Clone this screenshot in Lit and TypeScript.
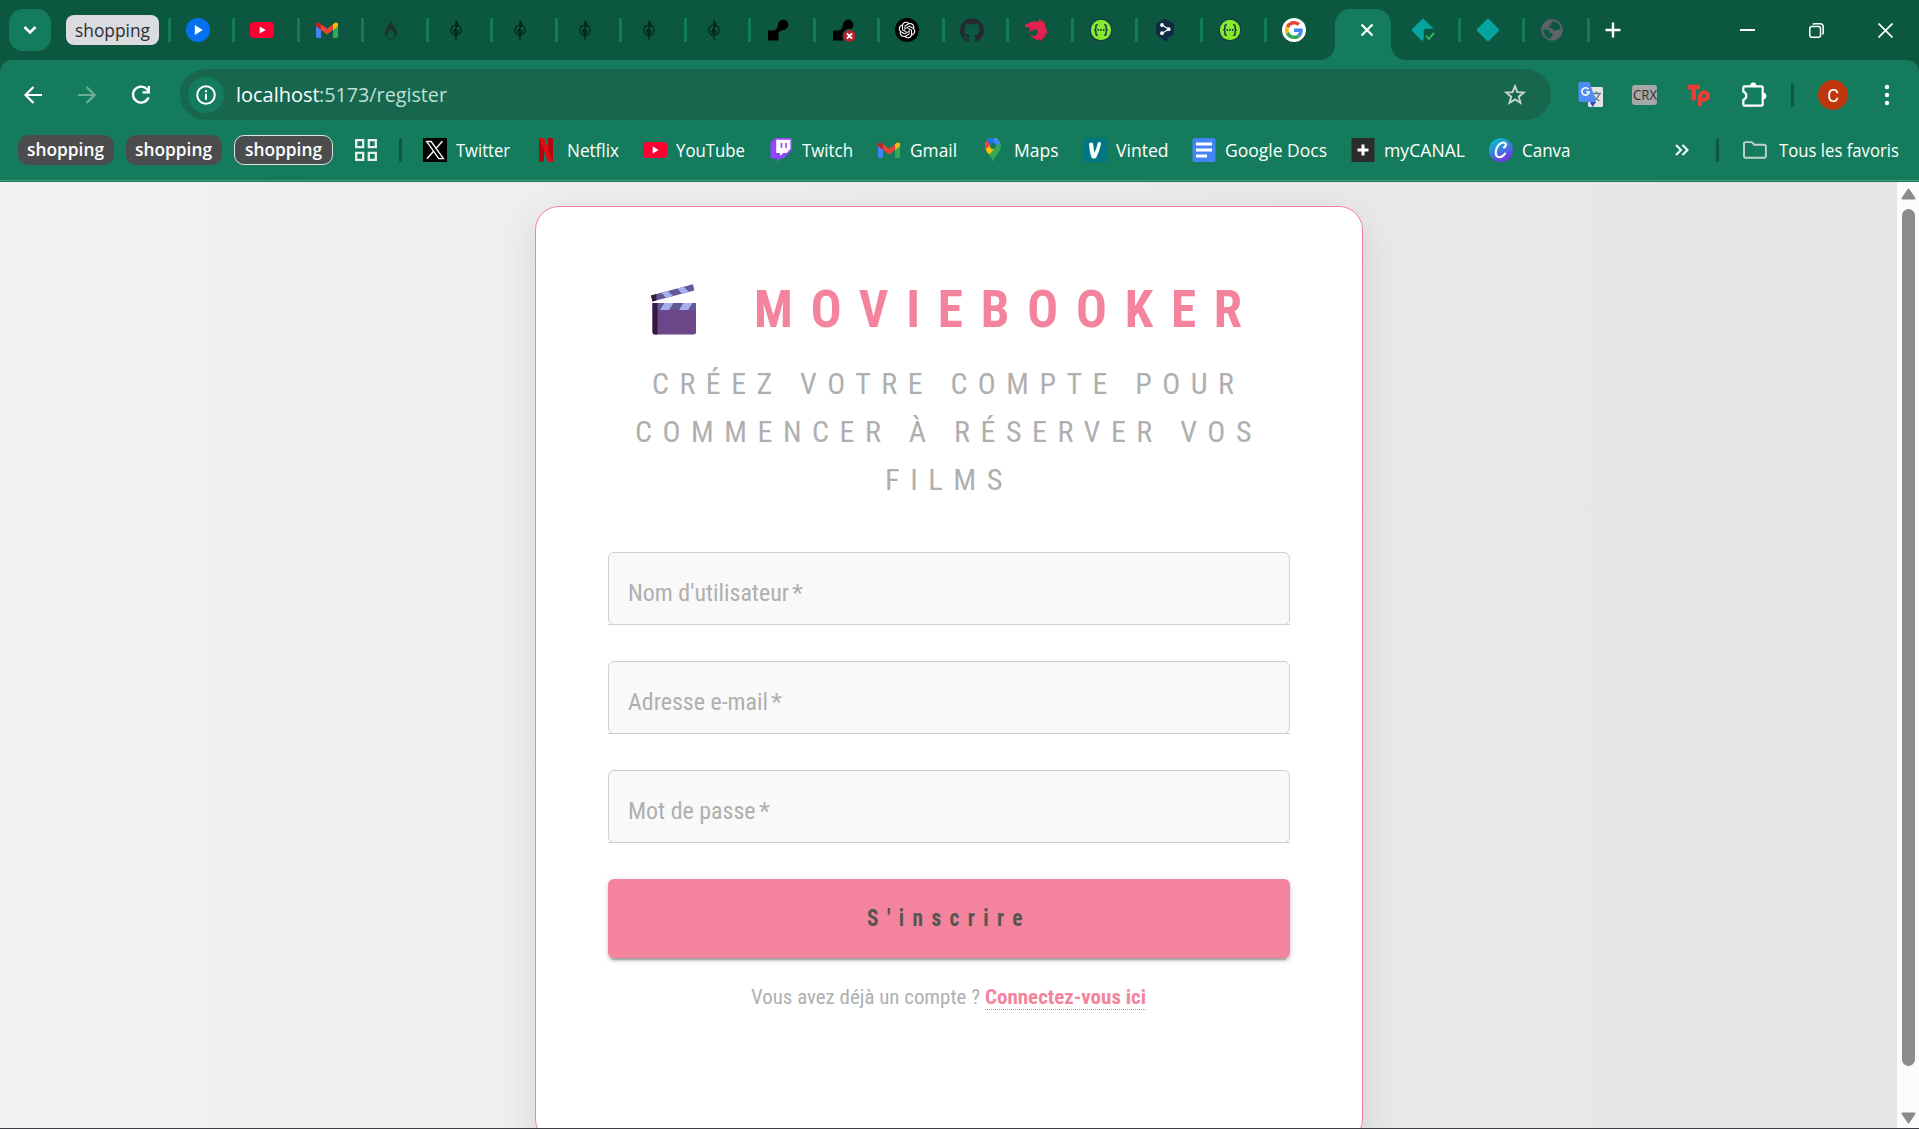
import { LitElement, html, css, svg } from "lit";
import type { TemplateResult } from "lit";
import { customElement, property } from "lit/decorators.js";

/** A single line of text condensed or widened to an exact width. */
@customElement("fit-text")
class FitText extends LitElement {
  @property() text = "";
  @property({ type: Number }) w = 0;
  @property({ type: Number }) ls = 0;
  static styles = css`
    :host { display: inline-block; white-space: pre; flex: none; }
    .t { display: inline-block; transform-origin: 0 50%; }
  `;
  render() {
    return html`<span class="t">${this.text}</span>`;
  }
  updated() {
    this.style.width = `${this.w}px`;
    const t = this.renderRoot.querySelector<HTMLElement>(".t")!;
    t.style.transform = "none";
    t.style.letterSpacing = "0px";
    const natural = t.getBoundingClientRect().width;
    const k = (this.w - this.text.length * this.ls) / natural;
    t.style.letterSpacing = `${this.ls / k}px`;
    t.style.transform = `scaleX(${k})`;
  }
}

const fit = (text: string, w: number, ls = 0) =>
  html`<fit-text .text=${text} .w=${w} .ls=${ls}></fit-text>`;

const gmail = html`<svg width="24" height="24" viewBox="0 0 24 24">
  <path d="M1 6.5V18.6q0 1.4 1.4 1.4H6V10.5z" fill="#4285f4"/>
  <path d="M18 10.5V20h3.6q1.4 0 1.4-1.4V6.5z" fill="#34a853"/>
  <path d="M6 6.2V12l6 4.6 6-4.6V6.2l-6 4.6z" fill="#ea4335"/>
  <path d="M1 6.4V8.2L6 12V6.2L4.8 5.2C3.2 4 1 4.8 1 6.4z" fill="#c5221f"/>
  <path d="M23 6.4V8.2L18 12V6.2l1.2-1C20.800 4 23 4.800 23 6.400z" fill="#fbbc04"/>
</svg>`;
const youtube = html`<svg width="24" height="24" viewBox="0 0 24 24">
  <rect x="0" y="4" width="24" height="16" rx="3.5" fill="#ff0033"/><path d="M9.700 8.500v7l6-3.500z" fill="#fff"/>
</svg>`;
const clef = html`<svg width="24" height="24" viewBox="0 0 24 24" fill="none" stroke="#06211a" stroke-width="1.200">
  <circle cx="12" cy="12.200" r="5.200"/>
  <path d="M12 22V3.200q2.600 2.400 1.400 4.600L11 11q-2 2.600 0 4 2.400.8 3-1.200 0-2-1.800-1.800-1.600.4-1 1.600"/>
  <path d="M12.400 2.600l1.600 3.600-1.600 1.400z" fill="#06211a" stroke="none"/>
</svg>`;
const blob = html`<svg width="24" height="24" viewBox="0 0 24 24">
  <path d="M2 12.500h4.500q4.500.2 5.500-5.500a5.200 5.200 0 1 1 5 5q-4.500.600-4.500 4.500V22.500H2z" fill="#000"/>
</svg>`;
const blobError = html`<svg width="24" height="24" viewBox="0 0 24 24">
  <path d="M2 12.500h4.500q4.500.2 5.500-5.500a5.200 5.200 0 1 1 5 5q-4.500.600-4.500 4.500V22.500H2z" fill="#000"/>
  <circle cx="18.500" cy="18" r="7.200" fill="#0b573f"/><circle cx="18.500" cy="18" r="6" fill="#b5202c"/>
  <path d="M15.900 15.400l5.200 5.200m0-5.200l-5.200 5.200" stroke="#fff" stroke-width="1.900"/>
</svg>`;
const swagger = html`<svg width="24" height="24" viewBox="0 0 24 24">
  <circle cx="12" cy="12" r="11.300" fill="#173647"/><circle cx="12" cy="12" r="10.200" fill="#85ea2d"/>
  <path d="M8.800 6.700Q6.900 6.600 6.900 8.500V10q0 2-1.600 2 1.600 0 1.600 2v1.500q0 1.900 1.900 1.800M15.200 6.700q1.900-.1 1.900 1.800V10q0 2 1.600 2-1.600 0-1.600 2v1.500q0 1.900-1.900 1.800" fill="none" stroke="#173647" stroke-width="1.500"/>
  <circle cx="9.300" cy="12" r=".95" fill="#173647"/><circle cx="12" cy="12" r=".95" fill="#173647"/><circle cx="14.700" cy="12" r=".95" fill="#173647"/>
</svg>`;

const icons: Record<string, TemplateResult> = {
  gmail, youtube, clef, blob, blobError, swagger,
  play: html`<svg width="24" height="24" viewBox="0 0 24 24"><circle cx="12" cy="12" r="12" fill="#0571f2"/><path d="M8.800 7v10l8-5z" fill="#fff"/></svg>`,
  flame: html`<svg width="24" height="24" viewBox="0 0 24 24"><path d="M11.500 2q1 3.500 4.500 7.500c5 6-.500 12.500-4 12.500s-9-5.500-4.500-12Q11 6 11.500 2z" fill="#1c352b"/><path d="M12 9.500q-5 6-4 9.500 1.800 3.200 4 2.800 2.200.4 4-2.800 1-3.500-4-9.500z" fill="#0b573f" stroke="#1c352b" stroke-width=".6"/><path d="M12 9.500L7 16m5-6.500l5 6.500" stroke="#1c352b" stroke-width="1.600"/></svg>`,
  openai: html`<svg width="24" height="24" viewBox="0 0 24 24"><circle cx="12" cy="12" r="12" fill="#000"/><g transform="translate(12 12) scale(.69) translate(-12 -12)"><path fill="#fff" d="M22.282 9.821a5.985 5.985 0 0 0-.516-4.910 6.046 6.046 0 0 0-6.510-2.900A6.065 6.065 0 0 0 4.981 4.182a5.985 5.985 0 0 0-3.998 2.900 6.046 6.046 0 0 0 .743 7.097 5.980 5.980 0 0 0 .510 4.911 6.051 6.051 0 0 0 6.515 2.900A5.985 5.985 0 0 0 13.260 24a6.056 6.056 0 0 0 5.772-4.206 5.990 5.990 0 0 0 3.998-2.900 6.056 6.056 0 0 0-.748-7.073zM13.260 22.430a4.476 4.476 0 0 1-2.876-1.041l.142-.080 4.778-2.758a.795.795 0 0 0 .393-.681v-6.737l2.020 1.169a.071.071 0 0 1 .038.052v5.583a4.504 4.504 0 0 1-4.495 4.493zM3.600 18.304a4.471 4.471 0 0 1-.535-3.014l.142.085 4.783 2.759a.771.771 0 0 0 .780 0l5.843-3.369v2.332a.080.080 0 0 1-.033.062L9.740 19.950a4.499 4.499 0 0 1-6.140-1.646zM2.340 7.896a4.485 4.485 0 0 1 2.366-1.973V11.600a.766.766 0 0 0 .388.677l5.815 3.354-2.020 1.169a.076.076 0 0 1-.071 0l-4.830-2.787A4.504 4.504 0 0 1 2.340 7.872zm16.597 3.855l-5.833-3.387L15.119 7.200a.076.076 0 0 1 .071 0l4.830 2.791a4.494 4.494 0 0 1-.676 8.105v-5.678a.790.790 0 0 0-.407-.667zm2.010-3.023l-.141-.085-4.774-2.782a.776.776 0 0 0-.785 0L9.409 9.230V6.897a.066.066 0 0 1 .028-.061l4.830-2.787a4.499 4.499 0 0 1 6.680 4.660zm-12.640 4.135l-2.020-1.164a.080.080 0 0 1-.038-.057V6.075a4.499 4.499 0 0 1 7.375-3.453l-.142.080L8.704 5.460a.795.795 0 0 0-.393.681zm1.097-2.365l2.602-1.500 2.607 1.500v2.999l-2.597 1.500-2.607-1.500z"/></g></svg>`,
  github: html`<svg width="24" height="24" viewBox="0 0 24 24"><path fill="#24292f" d="M12 .3a12 12 0 0 0-3.800 23.400c.6.1.8-.3.800-.6v-2c-3.300.7-4-1.600-4-1.600-.6-1.400-1.400-1.800-1.400-1.800-1-.7.1-.7.1-.7 1.200 0 1.900 1.200 1.900 1.200 1 1.800 2.800 1.300 3.500 1 0-.8.400-1.300.7-1.600-2.700-.3-5.500-1.300-5.500-6 0-1.200.5-2.300 1.300-3.100-.2-.4-.6-1.600 0-3.200 0 0 1-.3 3.400 1.200a11.500 11.500 0 0 1 6 0c2.300-1.500 3.300-1.200 3.300-1.200.6 1.600.2 2.800 0 3.200.9.800 1.300 1.900 1.300 3.200 0 4.600-2.800 5.600-5.500 5.900.5.400.9 1 .9 2.200v3.300c0 .3.100.7.800.6A12 12 0 0 0 12 .3"/></svg>`,
  nest: html`<svg width="24" height="24" viewBox="0 0 24 24"><path fill="#e0234e" d="M14.800.8q.8 1.800-.5 2.600-1.700.9-3-.3L8.400 4 6 3.800 4.500 5.500 1 6.500.8 8.800l3 .6q1.800-.2 2.400 1.200-.2 1.900-1.900 3.300 4-.4 6-2.300 2.200-1 3.300.9.900 2.700-1.500 4.500-3 1.700-6 .1 2 3.400 6.300 3.900l-.8 1.700q3.500-.4 4.600-2.400l-.4 3q3.500-1.900 3.700-5.200l1.400 2q.8-2.800-.3-4.600l2.100.8q1-3.400-1.400-7.200L21 6.500q-.2-2.700-2.200-4.200l-.4 2Q17 1.800 14.800.8z"/></svg>`,
  deepl: html`<svg width="24" height="24" viewBox="0 0 24 24"><path d="M12 .5l9 5.200v10.800l-6.500 3.800V24l-5-2.800L3 16.500V5.700z" fill="#0f2b46"/><path d="M9 7l7 4.200L9 15.200" stroke="#fff" stroke-width="1.100" fill="none"/><circle cx="9" cy="7" r="1.900" fill="#fff"/><circle cx="15.700" cy="11.200" r="1.900" fill="#fff"/><circle cx="9" cy="15.200" r="1.900" fill="#fff"/></svg>`,
  google: html`<svg width="24" height="24" viewBox="0 0 48 48"><circle cx="24" cy="24" r="24" fill="#fff"/><g transform="translate(24 24) scale(.76) translate(-24 -24)"><path fill="#EA4335" d="M24 9.500c3.540 0 6.710 1.220 9.210 3.600l6.850-6.850C35.900 2.380 30.470 0 24 0 14.620 0 6.510 5.380 2.560 13.220l7.980 6.190C12.430 13.720 17.740 9.500 24 9.500z"/><path fill="#4285F4" d="M46.980 24.550c0-1.570-.15-3.090-.38-4.550H24v9.020h12.940c-.58 2.960-2.260 5.480-4.780 7.180l7.730 6c4.510-4.180 7.090-10.360 7.090-17.650z"/><path fill="#FBBC05" d="M10.530 28.590c-.48-1.450-.76-2.990-.76-4.590s.27-3.140.76-4.590l-7.980-6.190C.92 16.460 0 20.120 0 24c0 3.880.92 7.540 2.560 10.780l7.970-6.190z"/><path fill="#34A853" d="M24 48c6.480 0 11.930-2.130 15.890-5.810l-7.730-6c-2.150 1.450-4.920 2.300-8.160 2.300-6.260 0-11.570-4.220-13.470-9.910l-7.980 6.190C6.510 42.620 14.620 48 24 48z"/></g></svg>`,
  diamondCheck: html`<svg width="24" height="24" viewBox="0 0 24 24"><path d="M10.700 1.400q1.300-1.200 2.600 0l9.300 9.300H15q-2.200 0-2.200 2.400v7q0 2-1.800 2.900L1.400 13.300q-1.200-1.300 0-2.600z" fill="#04a5a0"/><path d="M15 17.600l3 3.300 5-6" fill="none" stroke="#2fb457" stroke-width="2"/></svg>`,
  diamond: html`<svg width="24" height="24" viewBox="0 0 24 24"><path d="M10.700 1.400q1.300-1.200 2.600 0l9.300 9.300q1.200 1.300 0 2.600l-9.300 9.300q-1.300 1.200-2.600 0l-9.300-9.300q-1.200-1.300 0-2.600z" fill="#04a5a0"/></svg>`,
  globe: html`<svg width="24" height="24" viewBox="0 0 24 24"><circle cx="12" cy="12" r="10.700" fill="#5f6368"/><path d="M3.200 11.600h4q2.300 0 2.300 2.300v1.200h3v2.500l-2 2V21q-6.500-.8-7.300-9.400zM13.500 3.300q-3 1-3 3.200v1.200h-1.500q-.8 2.300 1.500 2.500 2.200-.2 2.600 1.800l2.600.8 1.600-1.200h3.300Q21 5.500 13.500 3.300z" fill="#0b573f"/></svg>`,
  x: html`<svg width="24" height="24" viewBox="0 0 24 24"><path d="M0 0h24v24H0z" fill="#000"/><path d="M3.600 3.500h4.600L20.400 20.600h-4.600z" fill="none" stroke="#fff" stroke-width="1.300"/><path d="M19.400 3.300l-6.800 7.600M10.800 13l-6.900 7.800" stroke="#fff" stroke-width="1.400"/></svg>`,
  netflix: html`<svg width="24" height="24" viewBox="0 0 24 24"><path d="M5 0h5v23.500L5 24zM14 0h5v24l-5-.5z" fill="#b1060f"/><path d="M5 0h5l9 24q-2.500-.500-5-.500z" fill="#e50914"/></svg>`,
  twitch: html`<svg width="24" height="24" viewBox="0 0 24 24"><path d="M6 0h17v12l-8.500 8.500h-3L8 24v-3.500H1.500V4.500z" fill="#9146ff"/><path d="M7.200 1.700h14.200V11l-3.800 4h-3.300l-3.200 3v-3H7.200z" fill="#fff"/><path d="M12.500 5v4.800M17 5v4.800" stroke="#9146ff" stroke-width="1.700"/></svg>`,
  maps: html`<svg width="24" height="24" viewBox="0 0 24 24"><clipPath id="pin"><path d="M12 0c4.500 0 8 3.400 8 7.900 0 6.100-6.200 8.600-8 15.800-1.800-7.200-8-9.700-8-15.800C4 3.400 7.500 0 12 0z"/></clipPath><g clip-path="url(#pin)"><path d="M0 0h24v24H0z" fill="#34a853"/><path d="M0 0h18L12 8 6 17H0z" fill="#fbbc04"/><path d="M0 0h9l3 8-6 7H0V0z" fill="#ea4335"/><path d="M4 12.500L10 6l4 4-7 8-5-3z" fill="#fbbc04"/><path d="M5.800 2.600L9 -1h12l-1.500 4.500L14 10z" fill="#4285f4"/><path d="M5.500 3L8 0h5l-1 8z" fill="#1a73e8"/></g><circle cx="12" cy="8" r="3" fill="#147c5c"/></svg>`,
  vinted: html`<svg width="24" height="24" viewBox="0 0 24 24"><rect width="24" height="24" rx="2" fill="#007782"/><path d="M6 6q0-1.500 2.300-1.600 1.600 0 1.700 1.200l1.400 9.400q2.300-4.700 3.200-9.600.5-1.500 2-1.400 1.700.2 1.400 1.800-1.500 7.500-4.700 13.800-.6 1-2.500 1T8.300 19Q6.400 12.500 6 6z" fill="#fff"/></svg>`,
  docs: html`<svg width="24" height="24" viewBox="0 0 24 24"><rect x=".5" width="23" height="24" rx="2" fill="#4285f4"/><path d="M4 6h16M4 12h16M4 18h11" stroke="#fff" stroke-width="2.800"/></svg>`,
  canal: html`<svg width="24" height="24" viewBox="0 0 24 24"><path d="M.5 0h23v24H.5z" fill="#2b2b2b"/><path d="M12 6.500v11M6.500 12h11" stroke="#fff" stroke-width="3"/></svg>`,
  canva: html`<svg width="24" height="24" viewBox="0 0 24 24"><defs><linearGradient id="cv" x1=".2" y1="0" x2=".7" y2="1"><stop offset="0" stop-color="#00c4cc"/><stop offset=".5" stop-color="#3a7fe0"/><stop offset="1" stop-color="#7d2ae8"/></linearGradient></defs><circle cx="12" cy="12" r="12" fill="url(#cv)"/><path d="M15 9.500q2.200-1.300 1.800-3.400-1.300-2.500-4.800-1-4.800 3-5.300 9.200.1 4.800 3.800 5 3.500-.300 5.500-3.800" fill="none" stroke="#fff" stroke-width="2.100" stroke-linecap="round"/></svg>`,
};

const leftTabs = ["play", "youtube", "gmail", "flame", "clef", "clef", "clef", "clef", "clef", "blob", "blobError", "openai", "github", "nest", "swagger", "deepl", "swagger", "google"];
const rightTabs = ["diamondCheck", "diamond", "globe"];
const bookmarks: [string, string, number][] = [
  ["x", "Twitter", 54], ["netflix", "Netflix", 52], ["youtube", "YouTube", 69], ["twitch", "Twitch", 51],
  ["gmail", "Gmail", 47], ["maps", "Maps", 44.5], ["vinted", "Vinted", 52.5], ["docs", "Google Docs", 102],
  ["canal", "myCANAL", 81], ["canva", "Canva", 48.5],
];

@customElement("browser-chrome")
class BrowserChrome extends LitElement {
  static styles = css`
    :host { display: block; flex: none; background: #0b573f; color: #fff; font-family: "Open Sans", "Noto Sans", sans-serif; }
    svg { display: block; flex: none; }
    .tabs { height: 60px; display: flex; align-items: center; box-sizing: border-box; padding-left: 9px; }
    .search { width: 42px; height: 42px; border-radius: 14px; background: #147c5c; display: grid; place-items: center; }
    .group { margin-left: 15px; width: 93px; height: 30px; border-radius: 8px; background: #dadce0; color: #2c2e31; display: flex; align-items: center; justify-content: center; font-size: 17.500px; line-height: 28px; margin-right: 8.500px; }
    .tab { width: 64.500px; box-sizing: border-box; height: 24px; border-left: 3px solid #147c5c; padding-left: 15px; flex: none; }
    .tab.plain { border-color: transparent; }
    .active { position: relative; width: 56px; height: 51px; margin: 9px 2px 0 6.500px; background: #147c5c; border-radius: 15px 15px 0 0; display: flex; align-items: center; justify-content: center; padding: 0 0 9px 7px; box-sizing: border-box; flex: none; }
    .active::before, .active::after { content: ""; position: absolute; bottom: 0; width: 15px; height: 15px; }
    .active::before { left: -15px; background: radial-gradient(circle at 0 0, transparent 14.500px, #147c5c 15.200px); }
    .active::after { right: -15px; background: radial-gradient(circle at 100% 0, transparent 14.500px, #147c5c 15.200px); }
    .end { width: 3px; height: 24px; background: #147c5c; }
    .plus { margin-left: 15px; }
    .win { margin-left: auto; display: flex; gap: 54px; padding-right: 26px; }
    .bars { background: #147c5c; border-radius: 12px 12px 0 0; height: 122px; box-sizing: border-box; display: flex; flex-direction: column; }
    .nav { display: flex; align-items: center; height: 69px; flex: none; padding-left: 21px; }
    .nav .btn { margin-right: 30px; }
    .nav .btn.last { margin-right: 27px; }
    .omni { width: 1371px; height: 51px; border-radius: 26px; background: #17674f; display: flex; align-items: center; box-sizing: border-box; padding: 0 24px 0 7.500px; flex: none; }
    .info { width: 36px; height: 36px; border-radius: 50%; background: #147c5c; display: grid; place-items: center; margin-right: 12px; }
    .url { font-size: 20.500px; line-height: 30px; display: flex; margin-top: -1px; }
    .path { color: #bfe0d3; }
    .star { margin-left: auto; }
    .ext { display: flex; align-items: center; flex: 1; padding-left: 26px; }
    .ext > * { margin-right: 28px; flex: none; }
    .sep { width: 3px; height: 24px; border-radius: 2px; background: #0b573f; flex: none; }
    .crx { width: 25px; height: 20px; border-radius: 3px; background: #a8a8a8; color: #2f2f2f; font-size: 14px; line-height: 20px; display: flex; justify-content: center; }
    .ext .crx { margin-right: 30px; }
    .ext .tp { margin-right: 29px; }
    .ext .puz { margin-right: 24px; }
    .ext .sep { margin-right: 24px; }
    .ext .avatar { width: 30px; height: 30px; border-radius: 50%; background: #bf360c; font: 18px/31px Roboto, sans-serif; text-align: center; margin-right: 27px; }
    .marks { display: flex; align-items: center; height: 42px; padding-left: 18px; flex: none; font-size: 17.500px; line-height: 28px; }
    .chip { width: 96px; height: 30px; box-sizing: border-box; border-radius: 10px; background: #4a4c4e; font-weight: 600; display: flex; justify-content: center; align-items: center; margin-right: 12px; line-height: 27px; padding: 0 1px 2px 0; }
    .chip.on { width: 99px; border: 1.500px solid #dfe3e2; margin-right: 22px; padding-bottom: 1px; }
    .marks .sep { margin: 0 21px 0 22px; }
    .list { display: flex; gap: 24px; }
    .bm { display: flex; align-items: center; gap: 9px; }
    .bm fit-text { margin-top: -1px; }
    .more { margin-left: auto; }
    .marks .sep.b { margin: 0 24px 0 27px; }
    .all { display: flex; align-items: center; gap: 12px; padding-right: 20px; }
    .all fit-text { margin-top: -1px; }
    .line { margin-top: 9px; height: 1px; background: #4a9a80; }
  `;
  render() {
    return html`
      <div class="tabs">
        <div class="search"><svg width="14" height="10" viewBox="0 0 14 10"><path d="M1.500 2l5.500 5.500L12.500 2" fill="none" stroke="#fff" stroke-width="2.600"/></svg></div>
        <div class="group">${fit("shopping", 75)}</div>
        ${leftTabs.map((t) => html`<div class="tab">${icons[t]}</div>`)}
        <div class="active"><svg width="14" height="14" viewBox="0 0 14 14"><path d="M1.500 1.500l11 11m0-11l-11 11" stroke="#fff" stroke-width="2.200"/></svg></div>
        ${rightTabs.map((t, i) => html`<div class="tab ${i ? "" : "plain"}">${icons[t]}</div>`)}
        <div class="end"></div>
        <svg class="plus" width="16" height="16" viewBox="0 0 16 16"><path d="M8 .5v15M.5 8h15" stroke="#fff" stroke-width="2.400"/></svg>
        <div class="win">
          <svg width="15" height="15" viewBox="0 0 15 15"><path d="M0 7h15" stroke="#fff" stroke-width="2"/></svg>
          <svg width="15" height="15" viewBox="0 0 15 15" fill="none" stroke="#fff" stroke-width="1.500"><rect x=".8" y="3.500" width="10.700" height="10.700" rx="2"/><path d="M3.600 1.200Q4.500.8 5.500.8H11q3.200 0 3.200 3.200v5.500q0 1.200-.8 2"/></svg>
          <svg width="15" height="15" viewBox="0 0 15 15"><path d="M.5.500l14 14m0-14l-14 14" stroke="#fff" stroke-width="1.700"/></svg>
        </div>
      </div>
      <div class="bars">
        <div class="nav">
          <svg class="btn" width="24" height="24" viewBox="0 0 24 24"><path d="M21 12H4.500M12.500 4l-8 8 8 8" fill="none" stroke="#fff" stroke-width="2.200"/></svg>
          <svg class="btn" width="24" height="24" viewBox="0 0 24 24"><path d="M3 12h16.500M11.500 4l8 8-8 8" fill="none" stroke="#6cae98" stroke-width="2.200"/></svg>
          <svg class="btn last" width="24" height="24" viewBox="0 0 24 24"><path d="M19.500 14.500A8 8 0 1 1 18 6.300l2 2.200" fill="none" stroke="#fff" stroke-width="2.300"/><path d="M21 3v7.500h-7.500V8.300h5.200V3z" fill="#fff"/></svg>
          <div class="omni">
            <div class="info"><svg width="20" height="20" viewBox="0 0 20 20"><circle cx="10" cy="10" r="8.800" fill="none" stroke="#fff" stroke-width="2"/><path d="M10 8.800v6M10 5.200v2" stroke="#fff" stroke-width="2"/></svg></div>
            <div class="url">${fit("localhost", 83.5)}<span class="path">${fit(":5173/register", 128)}</span></div>
            <svg class="star" width="24" height="24" viewBox="0 0 24 24"><path d="M12 3.200l2.400 6 6.400.4-5 4.100 1.700 6.300L12 16.500 6.500 20l1.700-6.300-5-4.100 6.400-.4z" fill="none" stroke="#c9d5d0" stroke-width="1.900"/></svg>
          </div>
          <div class="ext">
            <svg width="27" height="27" viewBox="0 0 27 27"><rect x="11" y="6" width="15" height="20" rx="1.500" fill="#e3e3e3"/><path d="M15 12.500h9M19.500 10.500v2M22.500 12.500q-1.500 5-6.500 7.500M16.500 14.500q2 4 6 5.500" fill="none" stroke="#607d8b" stroke-width="1.300"/><path d="M13 21h6l-3.500 5z" fill="#3048b0"/><path d="M2 1h10.500L19 21H3.500Q1.500 21 1.500 19V2.500Q1.500 1 3 1z" fill="#4f8df5"/><path d="M11.500 8.200A3.700 3.700 0 1 0 12.200 11H9" fill="none" stroke="#fff" stroke-width="1.600"/></svg>
            <div class="crx">${fit("CRX", 24)}</div>
            <svg class="tp" width="24" height="24" viewBox="0 0 24 24" fill="none" stroke="#ee3b33"><path d="M.5 4H13M6.700 3v14.500" stroke-width="4.600"/><circle cx="17.200" cy="13" r="3.900" stroke-width="3.600"/><path d="M13 12v11" stroke-width="4.400"/></svg>
            <svg class="puz" width="27" height="27" viewBox="0 0 27 27"><path d="M4.500 5.300h17q1.200 0 1.200 1.200v17q0 1.200-1.200 1.200h-17q-1.200 0-1.200-1.200V19q3-1.500 3-4.300T3.300 10.500v-4q0-1.200 1.200-1.200z" fill="none" stroke="#fff" stroke-width="2.200"/><path d="M10.500 5a2.800 3.200 0 0 1 5.600 0zM23 12a3 3 0 0 1 0 6z" fill="#fff" stroke="#fff" stroke-width="1"/></svg>
            <div class="sep"></div>
            <div class="avatar">C</div>
            <svg width="24" height="24" viewBox="0 0 24 24" fill="#fff"><circle cx="12" cy="4" r="2.200"/><circle cx="12" cy="12" r="2.200"/><circle cx="12" cy="20" r="2.200"/></svg>
          </div>
        </div>
        <div class="marks">
          <div class="chip">${fit("shopping", 77)}</div>
          <div class="chip">${fit("shopping", 77)}</div>
          <div class="chip on">${fit("shopping", 77)}</div>
          <svg width="22" height="22" viewBox="0 0 22 22" fill="none" stroke="#e6f0ec" stroke-width="2.300"><path d="M1.200 1.200h7v7h-7zM13.800 1.200h7v7h-7zM1.200 13.800h7v7h-7zM13.800 13.800h7v7h-7z"/></svg>
          <div class="sep"></div>
          <div class="list">${bookmarks.map(([i, t, w]) => html`<div class="bm">${icons[i]}${fit(t, w)}</div>`)}</div>
          <svg class="more" width="14" height="12" viewBox="0 0 14 12"><path d="M1 1l5 5-5 5M7.500 1l5 5-5 5" fill="none" stroke="#fff" stroke-width="2"/></svg>
          <div class="sep b"></div>
          <div class="all"><svg width="24" height="18" viewBox="0 0 24 18"><path d="M2.500 1.100h6.300l2.600 2.700h10q1.500 0 1.500 1.500v10q0 1.500-1.500 1.500h-19Q1 16.800 1 15.300V2.600q0-1.500 1.500-1.500z" fill="none" stroke="#c3d1cb" stroke-width="1.900"/></svg>${fit("Tous les favoris", 120)}</div>
        </div>
        <div class="line"></div>
      </div>
    `;
  }
}

@customElement("register-page")
class RegisterPage extends LitElement {
  static styles = css`
    :host { display: flex; flex: 1; min-height: 0; font-family: "Roboto Condensed", Roboto, sans-serif; font-stretch: 75%; color: #afafaf; }
    .view { flex: 1; display: flex; justify-content: center; align-items: flex-start; overflow: hidden; background: linear-gradient(90deg, #f2f2f2, #e5e5e5); padding-top: 24px; }
    .card { width: 828px; height: 937px; flex: none; box-sizing: border-box; padding: 72px; border: 1px solid #f4849d; border-radius: 24px; background: #fff; box-shadow: 0 12px 36px rgba(0, 0, 0, 0.11); display: flex; flex-direction: column; align-items: stretch; }
    .title { display: flex; height: 60px; padding-left: 43px; color: #f4849d; font-size: 51px; line-height: 62px; font-weight: 700; }
    .clap { margin: 5px 57px 0 0; flex: none; }
    .sub { display: flex; flex-direction: column; align-items: center; font-size: 30px; line-height: 48px; margin: 21px 0 48px; }
    .field { position: relative; height: 73px; box-sizing: border-box; border: 1px solid #cfcfcf; border-radius: 6px; background: #f9f9f9; margin-bottom: 36px; font-size: 24px; line-height: 36px; padding: 22px 0 0 19.500px; display: flex; gap: 3px; flex: none; }
    .field::after { content: ""; position: absolute; left: -1px; right: -1px; bottom: -1px; height: 1px; background: #cfcfcf; }
    .button { height: 79px; flex: none; border-radius: 6px; background: #f4849d; color: #555; font-size: 24px; line-height: 79px; font-weight: 700; display: flex; justify-content: center; box-shadow: 0 4.500px 1.500px -3px rgba(0,0,0,.2), 0 3px 3px rgba(0,0,0,.14), 0 1.500px 7.500px rgba(0,0,0,.12); }
    .foot { display: flex; justify-content: center; gap: 5px; margin-top: 24px; font-size: 21px; line-height: 30px; }
    .link { color: #f4849d; font-weight: 700; height: 27px; border-bottom: 1px dotted #999; }
    .scroll { width: 22px; background: #fcfcfc; display: flex; flex-direction: column; align-items: center; padding: 6px 0 4px; box-sizing: border-box; }
    .thumb { width: 13px; height: 857px; border-radius: 7px; background: #8b8b8b; margin: 9px 0 auto; }
    svg { display: block; }
  `;
  render() {
    return html`
      <div class="view">
        <div class="card">
          <div class="title">
            <svg class="clap" width="46" height="51" viewBox="0 0 46 51">
              <clipPath id="arm"><path d="M0 11.500L42 .2l1.300 6.200L1.500 17.500z"/></clipPath>
              <g clip-path="url(#arm)"><path d="M0 0h46v20H0z" fill="#635994"/><path d="M0 0h5.500v20H0z" fill="#321b41"/><path d="M9 7l7 8 7-2-8-8zM25 3l7 8 7-2-8-8z" fill="#a6aef0"/></g>
              <rect x="1.500" y="19" width="43.500" height="31.500" rx="2.500" fill="#6d4589"/>
              <path d="M1.500 19H45v7H1.500z" fill="#635994"/><path d="M13.500 19h9l-4.500 7H9zM32.500 19h9L37 26h-9z" fill="#a6aef0"/>
              <path d="M1.500 19h5v31.500H4q-2.500 0-2.500-2.500z" fill="#321b41"/>
            </svg>
            ${fit("MOVIEBOOKER", 506, 17.85)}
          </div>
          <div class="sub">
            ${fit("CRÉEZ VOTRE COMPTE POUR", 592.5, 10.5)}
            ${fit("COMMENCER À RÉSERVER VOS", 627, 10.5)}
            ${fit("FILMS", 128, 10.5)}
          </div>
          <div class="field">${fit("Nom d'utilisateur", 161)}${fit("*", 11)}</div>
          <div class="field">${fit("Adresse e-mail", 140)}${fit("*", 11)}</div>
          <div class="field">${fit("Mot de passe", 127.5)}${fit("*", 11)}</div>
          <div class="button">${fit("S'inscrire", 164, 8.4)}</div>
          <div class="foot">${fit("Vous avez déjà un compte ?", 229)}<span class="link">${fit("Connectez-vous ici", 161)}</span></div>
        </div>
      </div>
      <div class="scroll">
        <svg width="15" height="12" viewBox="0 0 15 12"><path d="M7.500 1.500L13.500 10.500H1.500z" fill="#8b8b8b" stroke="#8b8b8b" stroke-width="2" stroke-linejoin="round"/></svg>
        <div class="thumb"></div>
        <svg width="15" height="12" viewBox="0 0 15 12"><path d="M7.500 10.500L13.500 1.500H1.500z" fill="#8b8b8b" stroke="#8b8b8b" stroke-width="2" stroke-linejoin="round"/></svg>
      </div>
    `;
  }
}

@customElement("app-root")
class AppRoot extends LitElement {
  static styles = css`
    :host { display: flex; flex-direction: column; width: 1919px; height: 1129px; overflow: hidden; box-sizing: border-box; border-bottom: 1px solid #3c3d42; }
  `;
  render() {
    return html`<browser-chrome></browser-chrome><register-page></register-page>`;
  }
}
